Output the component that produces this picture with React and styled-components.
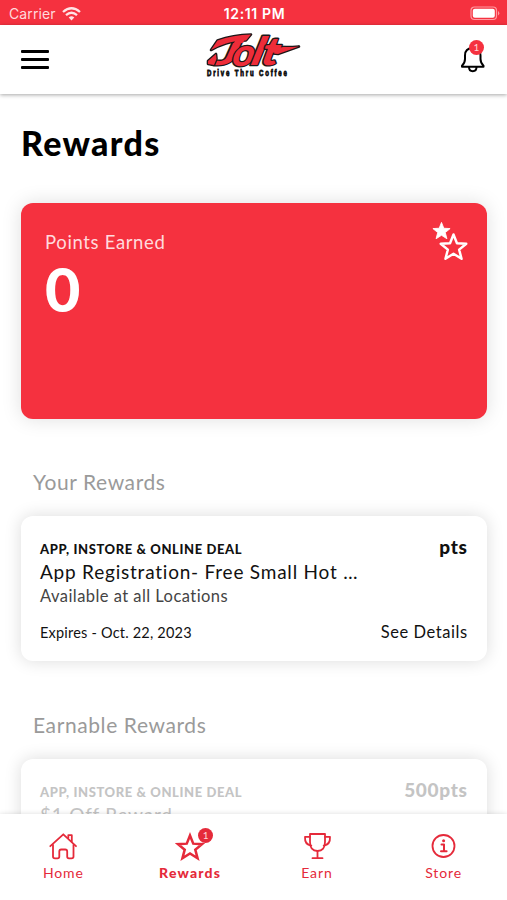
import React from 'react'
import styled, { createGlobalStyle } from 'styled-components'

const RED = '#f5313f'
const NAV_RED = '#e52a3a'

const GlobalStyle = createGlobalStyle`
  * {
    box-sizing: border-box;
  }

  body {
    margin: 0;
    overflow: hidden;
    background: #fff;
    font-family: Lato, "Open Sans", sans-serif;
  }
`

const Screen = styled.div`
  display: flex;
  flex-direction: column;
  width: 507px;
  height: 900px;
  overflow: hidden;
  background: #fff;
`

const StatusBar = styled.div`
  display: grid;
  grid-template-columns: 1fr auto 1fr;
  align-items: center;
  flex: none;
  height: 25px;
  padding: 2px 7px 0 9px;
  background: ${RED};
  color: #fff;
  font-family: Inter, sans-serif;
  font-size: 14px;
  line-height: 20px;
`

const Carrier = styled.div`
  display: flex;
  align-items: center;
  gap: 6px;
  color: #ffd9dc;
  letter-spacing: 0.1px;
`

const Clock = styled.div`
  font-weight: 600;
  font-size: 14px;
  letter-spacing: 0.65px;
`

const Battery = styled.div`
  display: flex;
  justify-content: flex-end;
`

const Header = styled.header`
  display: flex;
  align-items: center;
  justify-content: space-between;
  flex: none;
  height: 69px;
  padding: 0 21px;
  background: #fff;
  box-shadow: 0 1px 4px rgba(0, 0, 0, 0.35);
  z-index: 1;
`

const MenuButton = styled.div`
  display: flex;
  flex-direction: column;
  gap: 5px;
  width: 48px;

  span {
    width: 28px;
    height: 3px;
    border-radius: 1px;
    background: #000;
  }
`

const BellButton = styled.div`
  position: relative;
  display: flex;
  justify-content: flex-end;
  width: 48px;
`

const Badge = styled.span`
  position: absolute;
  top: ${props => props.$top};
  right: ${props => props.$right};
  width: 15px;
  height: 15px;
  border-radius: 50%;
  background: ${props => props.$color || RED};
  color: #ffd5d8;
  font-size: 10px;
  font-weight: 400;
  letter-spacing: 0;
  line-height: 15px;
  text-align: center;
`

const Content = styled.main`
  flex: 1;
  min-height: 0;
  padding: 31px 20px 0 21px;
  overflow: hidden;
`

const Title = styled.h1`
  margin: 0;
  color: #000;
  font-size: 34px;
  font-weight: 900;
  line-height: 36px;
  letter-spacing: 1.3px;
`

const PointsCard = styled.section`
  display: flex;
  justify-content: space-between;
  height: 216px;
  margin-top: 42px;
  padding: 18px 19px 0 24px;
  border-radius: 12px;
  background: ${RED};
  box-shadow: 0 0 20px rgba(0, 0, 0, 0.13);
`

const PointsLabel = styled.div`
  padding-top: 9px;
  color: #ffdadd;
  font-size: 18.5px;
  line-height: 24px;
  letter-spacing: 0.65px;
`

const PointsValue = styled.div`
  color: #fff;
  font-size: 61px;
  font-weight: 900;
  line-height: 70px;
`

const SectionTitle = styled.h2`
  margin: ${props => props.$gap} 0 0 12px;
  color: #9a9a9a;
  font-size: 21px;
  font-weight: 400;
  line-height: 28px;
  letter-spacing: 0.6px;
`

const DealCard = styled.section`
  display: grid;
  grid-template-columns: 1fr auto;
  align-content: start;
  height: 145px;
  margin-top: 20px;
  padding: 20px 20px 0 19px;
  border-radius: 12px;
  background: #fff;
  box-shadow: 0 0 17px rgba(0, 0, 0, 0.14);
  color: ${props => (props.$muted ? '#c4c4c4' : '#111')};
`

const DealKind = styled.div`
  margin-top: 3px;
  font-size: 13px;
  font-weight: 900;
  line-height: 20px;
  letter-spacing: 0.6px;
`

const DealPoints = styled.div`
  margin-right: -0.7px;
  font-size: 19px;
  font-weight: 900;
  line-height: 22px;
  letter-spacing: 0.7px;
  text-align: right;
`

const DealName = styled.div`
  grid-column: 1 / -1;
  height: 24px;
  margin-top: 1px;
  font-size: 19px;
  line-height: 24px;
  letter-spacing: 0.78px;
`

const DealPlace = styled.div`
  grid-column: 1 / -1;
  height: 24px;
  color: ${props => (props.$muted ? '#c4c4c4' : '#444')};
  font-size: 16.5px;
  line-height: 24px;
  letter-spacing: 0.45px;
`

const DealExpiry = styled.div`
  height: 24px;
  margin-top: 13px;
  font-size: 14.5px;
  line-height: 24px;
  letter-spacing: 0.2px;
`

const DealLink = styled.div`
  height: 24px;
  margin: 12px -0.6px 0 0;
  font-size: 16.5px;
  line-height: 24px;
  letter-spacing: 0.55px;
`

const TabBar = styled.nav`
  display: grid;
  grid-template-columns: repeat(4, 1fr);
  flex: none;
  height: 86px;
  background: #fff;
  box-shadow: 0 0 5px rgba(0, 0, 0, 0.14);
  z-index: 1;
`

const Tab = styled.div`
  display: flex;
  flex-direction: column;
  align-items: center;
  padding-top: 17px;
  color: ${NAV_RED};
  font-size: 14px;
  font-weight: ${props => (props.$active ? 900 : 400)};
  line-height: 20px;
  letter-spacing: ${props => (props.$active ? '1.2px' : '0.9px')};
`

const TabIcon = styled.div`
  position: relative;
  width: 30px;
  height: 32px;
`

const LogoMark = styled.svg`
  flex: none;
  overflow: visible;
`

const WifiIcon = () => (
  <svg width="19" height="14" viewBox="0 0 19 14" fill="none" stroke="#ffe3e5" strokeWidth="2.3">
    <path d="M1 5 Q9.5 -2.6 18 5" />
    <path d="M4 8.2 Q9.5 3.4 15 8.2" />
    <path d="M6.7 10.6 Q9.5 8 12.3 10.6 L9.5 13.6 Z" fill="#ffe3e5" stroke="none" />
  </svg>
)

const BatteryIcon = () => (
  <svg width="31" height="15" viewBox="0 0 31 15">
    <rect x="2" y="1" width="25.5" height="12.5" rx="3.5" fill="none" stroke="#ff9aa1" strokeWidth="1.2" />
    <rect x="3.8" y="2.8" width="22" height="9" rx="2" fill="#fff" />
    <path d="M29 5 Q31.6 7.2 29 9.5 Z" fill="#ff9aa1" />
  </svg>
)

const Logo = () => (
  <LogoMark width="96" height="55" viewBox="0 0 96 55">
    <g
      stroke="#1c1718"
      strokeWidth="2.6"
      strokeLinejoin="round"
      fill="#ee2c39"
      fontFamily="Lato, sans-serif"
      fontWeight="900"
      paintOrder="stroke"
    >
      <text fontSize="36" transform="translate(6 33) skewX(-24) scale(1.45 1)">J</text>
      <path d="M2 32 L2 29 L10 22 L10.5 27 L8 33 Z" />
      <path d="M5 18 L11.5 8.5 Q27 3 45 2.5 L40 8.5 Q29 8.5 20 11.5 Q12 14 5 18 Z" />
      {/* red bridge between the stem of the J and its flag */}
      <path d="M28 11 L30 7 L39 7 L37 11 Z" stroke="none" />
      <text fontSize="38" transform="translate(23.5 33.5) skewX(-18) scale(1 1)">o</text>
      <text fontSize="39" transform="translate(42 33) skewX(-22) scale(1.2 1)">l</text>
      <path d="M62 13.5 Q76 16 93 14.5 L72 22 L62 21 Z" />
      <text fontSize="39" transform="translate(52 33) skewX(-20) scale(1.15 1)">t</text>
      <path d="M63 14 Q76 16.4 90 15 L72 21.3 L63 20 Z" stroke="none" />
    </g>
    <text
      x="0"
      y="0"
      transform="translate(1 44.3) scale(0.72 1)"
      textLength="111"
      fontFamily="Liberation Sans, sans-serif"
      fontSize="8.4"
      fontWeight="700"
      fill="#111"
      stroke="#111"
      strokeWidth="0.8"
    >
      Drive Thru Coffee
    </text>
  </LogoMark>
)

const BellIcon = () => (
  <svg width="26" height="29" viewBox="0 0 26 29" fill="none" stroke="#000" strokeWidth="2" strokeLinejoin="round">
    <path d="M2 20.7 Q5 18 5 14 V10.5 Q5 3 12.8 3 Q20.5 3 20.5 10.5 V14 Q20.5 18 23.5 20.7 V21.7 H2 Z" />
    <path d="M9 22 Q9 26.2 12.8 26.2 Q16.5 26.2 16.5 22" />
  </svg>
)

const STAR = 'M0 -10 L2.7 -3.2 L10 -2.8 L4.4 1.8 L6.3 9 L0 5 L-6.3 9 L-4.4 1.8 L-10 -2.8 L-2.7 -3.2 Z'

const StarsIcon = () => (
  <svg width="36" height="40" viewBox="0 0 36 40" stroke="#fff" strokeLinejoin="round">
    <path d={STAR} transform="translate(9.5 10) scale(0.86)" fill="#fff" strokeWidth="1" />
    <path d={STAR} transform="translate(21.5 26.3) scale(1.28)" fill={RED} strokeWidth="1.9" />
  </svg>
)

const iconProps = {
  width: 30,
  height: 32,
  viewBox: '0 0 30 32',
  fill: 'none',
  stroke: NAV_RED,
  strokeWidth: 1.8,
  strokeLinejoin: 'round',
  strokeLinecap: 'round'
}

const HomeIcon = () => (
  <svg {...iconProps}>
    <path d="M2.3 15.2 L15.3 3.3 L28 15.2" />
    <path d="M5 14 V25.5 Q5 27.3 7 27.3 H9.5 Q11.3 27.3 11.3 25.5 V20.5 Q11.3 18.5 13.2 18.5 H17.2 Q19.2 18.5 19.2 20.5 V25.5 Q19.2 27.3 21 27.3 H23.5 Q25.5 27.3 25.5 25.5 V14" />
    <path d="M20.3 7 V4.2 H23.8 V10.5" />
  </svg>
)

const StarIcon = () => (
  <svg {...iconProps}>
    <path d={STAR} transform="translate(15 16.5) scale(1.2)" strokeWidth="2.1" strokeLinejoin="miter" />
  </svg>
)

const TrophyIcon = () => (
  <svg {...iconProps}>
    <path d="M8 3 H23 V11 Q23 20 15.5 20 Q8 20 8 11 Z" />
    <path d="M8 5.8 H3 Q2.5 13.8 9.3 14.6 M23 5.8 H28 Q28.5 13.8 21.7 14.6" />
    <path d="M15.5 20 V27 M10.5 27.2 H20.5" />
  </svg>
)

const InfoIcon = () => (
  <svg {...iconProps}>
    <circle cx="14.5" cy="15" r="11" />
    <path d="M12.5 13.5 H15 V20 M12 20.2 H17.6" strokeWidth="2" />
    <circle cx="14.6" cy="9.8" r="1.5" fill={NAV_RED} stroke="none" />
  </svg>
)

const tabs = [
  { label: 'Home', Icon: HomeIcon },
  { label: 'Rewards', Icon: StarIcon, active: true, badge: 1 },
  { label: 'Earn', Icon: TrophyIcon },
  { label: 'Store', Icon: InfoIcon }
]

const Deal = ({ deal, muted }) => (
  <DealCard $muted={muted}>
    <DealKind>{deal.kind}</DealKind>
    <DealPoints>{deal.points}</DealPoints>
    <DealName>{deal.name}</DealName>
    {deal.place && <DealPlace $muted={muted}>{deal.place}</DealPlace>}
    {deal.expires && <DealExpiry>Expires - {deal.expires}</DealExpiry>}
    {deal.expires && <DealLink>See Details</DealLink>}
  </DealCard>
)

const registration = {
  kind: 'APP, INSTORE & ONLINE DEAL',
  points: 'pts',
  name: 'App Registration- Free Small Hot …',
  place: 'Available at all Locations',
  expires: 'Oct. 22, 2023'
}

const dollarOff = {
  kind: 'APP, INSTORE & ONLINE DEAL',
  points: '500pts',
  name: '$1 Off Reward'
}

const App = () => (
  <Screen>
    <GlobalStyle />
    <StatusBar>
      <Carrier>Carrier <WifiIcon /></Carrier>
      <Clock>12:11 PM</Clock>
      <Battery><BatteryIcon /></Battery>
    </StatusBar>
    <Header>
      <MenuButton>
        <span />
        <span />
        <span />
      </MenuButton>
      <Logo />
      <BellButton>
        <BellIcon />
        <Badge $top="-5px" $right="2px">1</Badge>
      </BellButton>
    </Header>
    <Content>
      <Title>Rewards</Title>
      <PointsCard>
        <div>
          <PointsLabel>Points Earned</PointsLabel>
          <PointsValue>0</PointsValue>
        </div>
        <StarsIcon />
      </PointsCard>
      <SectionTitle $gap="49px">Your Rewards</SectionTitle>
      <Deal deal={registration} />
      <SectionTitle $gap="50px">Earnable Rewards</SectionTitle>
      <Deal deal={dollarOff} muted />
    </Content>
    <TabBar>
      {tabs.map(({ label, Icon, active, badge }) => (
        <Tab key={label} $active={active}>
          <TabIcon>
            <Icon />
            {badge && <Badge $top="-3px" $right="-8px" $color={NAV_RED}>{badge}</Badge>}
          </TabIcon>
          {label}
        </Tab>
      ))}
    </TabBar>
  </Screen>
)

export default App
